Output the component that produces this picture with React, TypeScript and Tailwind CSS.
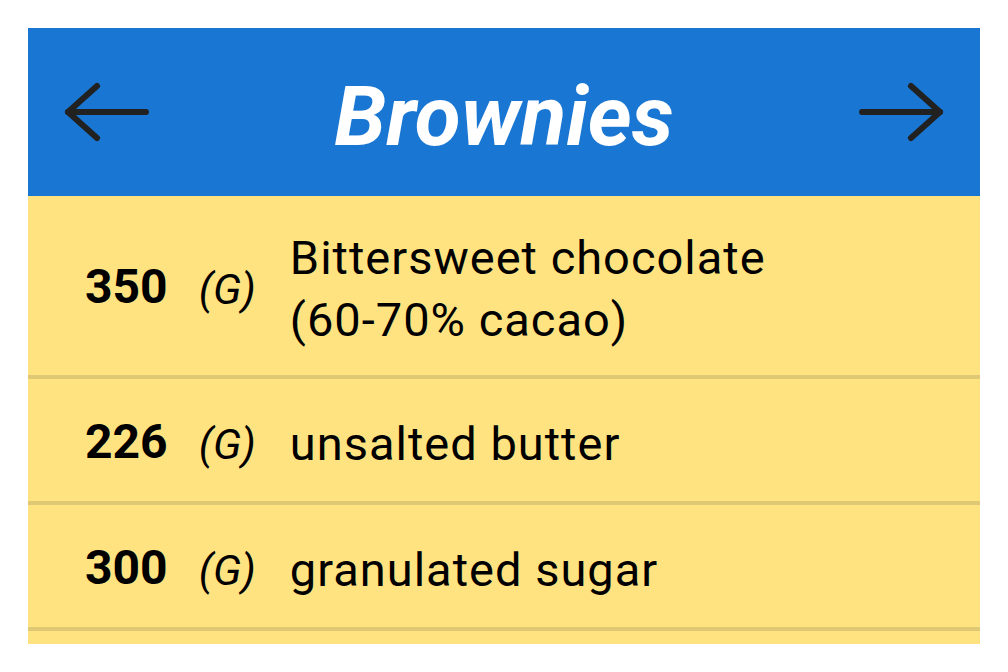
import React from 'react';

interface Ingredient {
  amount: string;
  unit: string;
  name: string;
}

const ingredients: Ingredient[] = [
  { amount: '350', unit: 'G', name: 'Bittersweet chocolate (60-70% cacao)' },
  { amount: '226', unit: 'G', name: 'unsalted butter' },
  { amount: '300', unit: 'G', name: 'granulated sugar' },
];

const Arrow: React.FC<{ flip?: boolean }> = ({ flip }) => (
  <svg
    width="90"
    height="64"
    viewBox="0 0 90 64"
    fill="none"
    stroke="#212121"
    strokeWidth="6"
    strokeLinecap="round"
    strokeLinejoin="round"
    className={flip ? '-scale-x-100' : ''}
  >
    <path d="M35 6 L6 32 L35 58" />
    <path d="M6 32 H84" />
  </svg>
);

const App: React.FC = () => {
  return (
    <div className="min-h-screen bg-white p-[28px]" style={{ fontFamily: 'Roboto, "Liberation Sans", sans-serif' }}>
      <div className="flex h-[616px] flex-col overflow-hidden">
        {/* header */}
        <div className="flex h-[168px] shrink-0 items-center justify-between bg-[#1976D2] px-[34px]">
          <Arrow />
          <h1 className="mt-[9px] text-[84px] font-bold italic leading-none text-white">Brownies</h1>
          <Arrow flip />
        </div>

        {/* ingredient list */}
        <div className="flex-1 bg-[#FFE380]">
          {ingredients.map((item) => (
            <div
              key={item.amount + item.name}
              className="flex min-h-[126px] items-center border-b-4 border-[#DFC873] pb-[24px] pl-[57px] pr-[160px] pt-[31px] text-black"
            >
              <span className="mb-[4px] mr-[31px] text-[48px] font-bold leading-[62px]">{item.amount}</span>
              <span className="mr-[34px] text-[43px] italic leading-[62px]">({item.unit})</span>
              <span className="flex-1 text-[47px] leading-[62px] tracking-[1px]">{item.name}</span>
            </div>
          ))}
        </div>
      </div>
    </div>
  );
};

export default App;
